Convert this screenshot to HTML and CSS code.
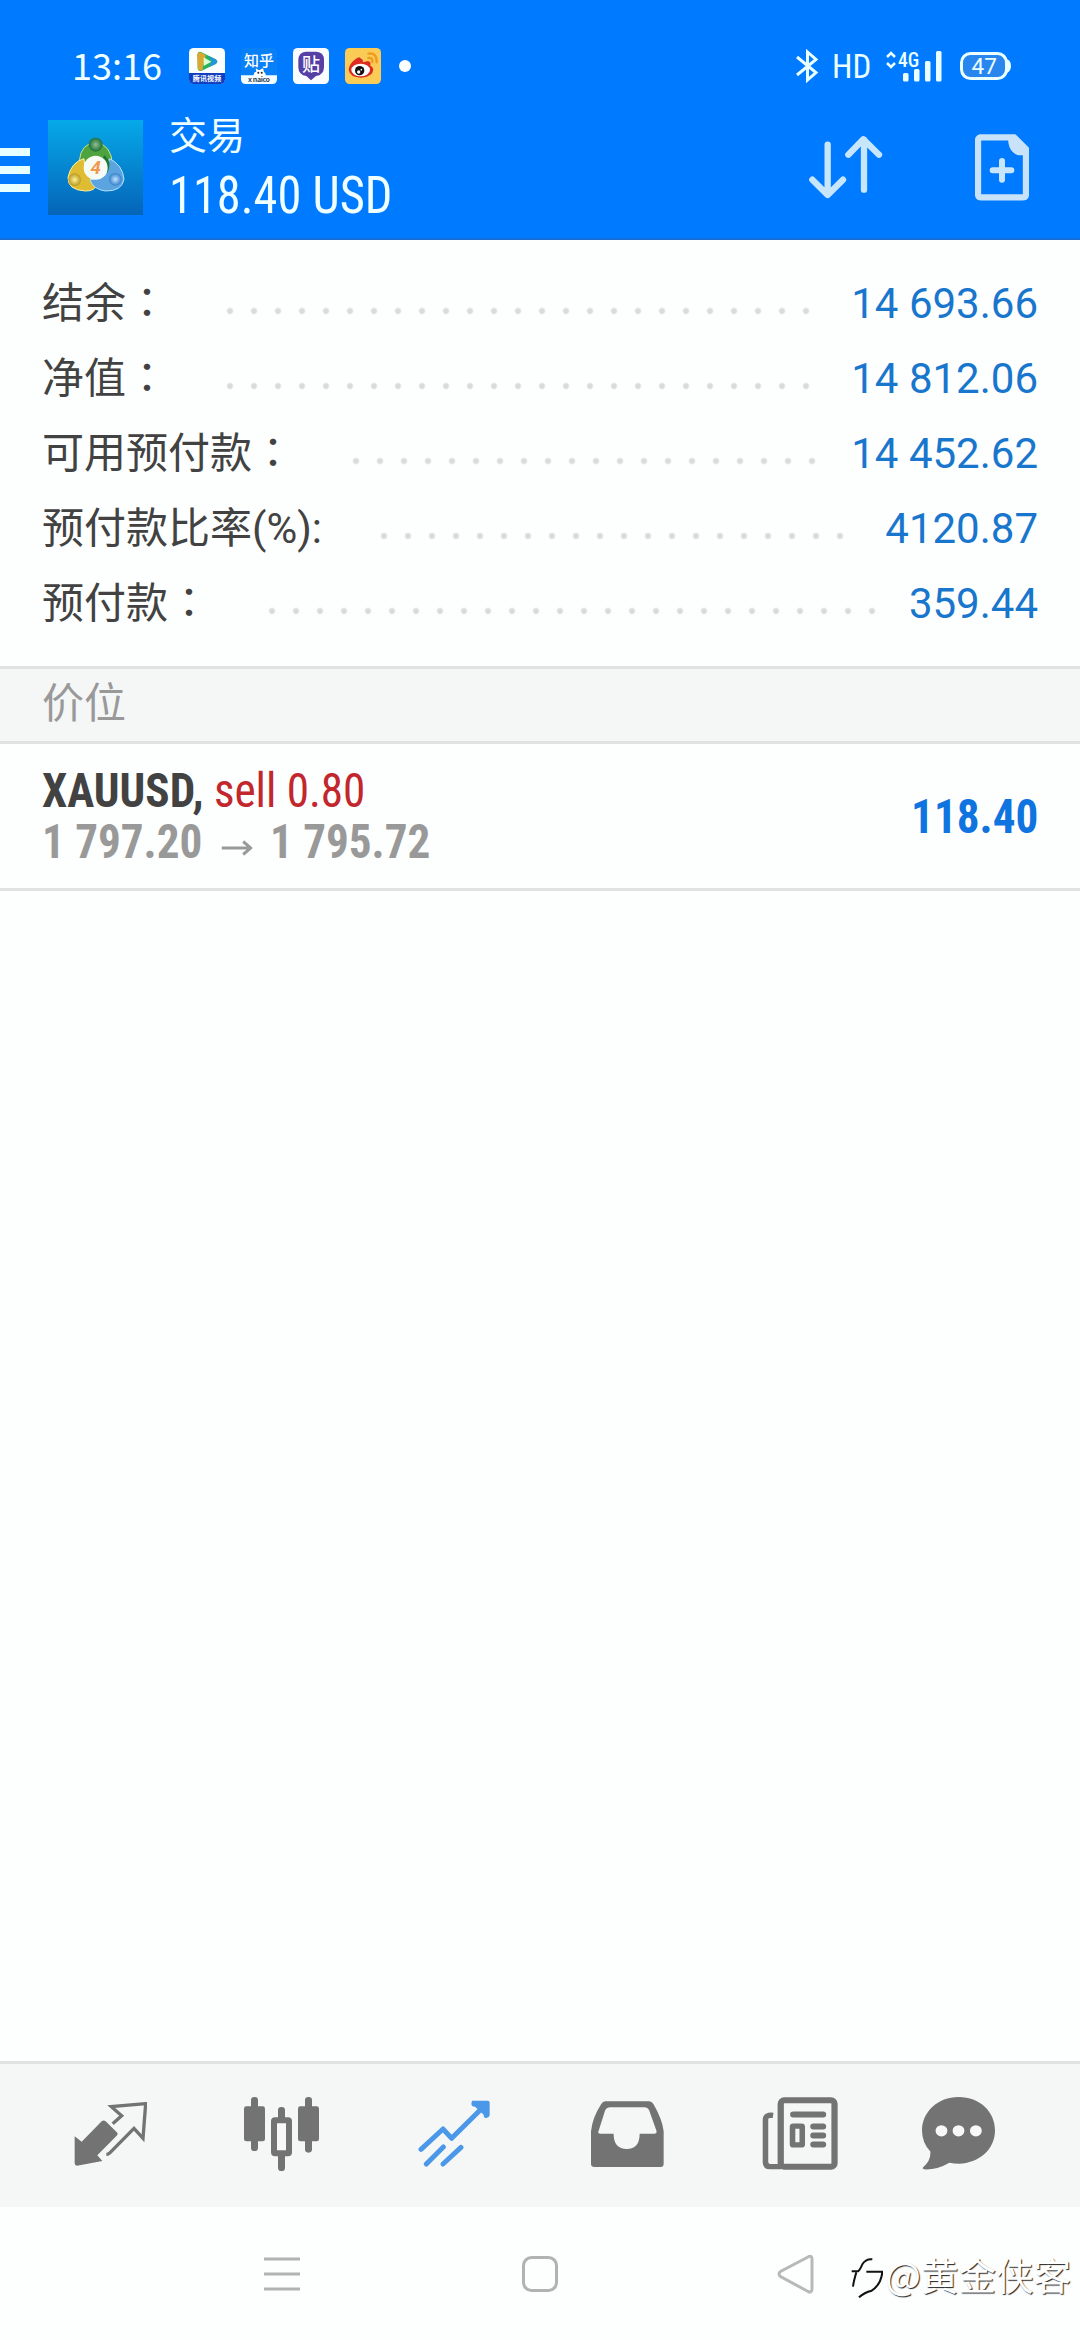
FILE: index.html
```html
<!DOCTYPE html>
<html lang="zh-CN">
<head>
  <meta charset="UTF-8" />
  <meta name="viewport" content="width=device-width, initial-scale=1.0"/>
  <title>交易</title>
  <link rel="stylesheet" href="styles.css">
</head>
<body>
  <header>
    <!-- status bar -->
    <div class="status-bar">
      <span class="time">13:16</span>
      <div class="notif-icons">
        <svg width="36" height="36" viewBox="0 0 108 108">
          <rect width="108" height="108" rx="14" fill="#fbffff"/>
          <path d="M0 75H108V94Q108 108 94 108H14Q0 108 0 94Z" fill="#123fc0"/>
          <path d="M26 17Q27 9 36 12L80 34Q90 41 80 48L38 68Q27 71 26 60Z" fill="#2bb35c"/>
          <path d="M24 20Q26 10 38 14L50 22 40 66Q28 71 26 60Z" fill="#d9a832"/>
          <path d="M58 23L80 34Q90 41 80 48L60 57 68 40Z" fill="#2196d8"/>
          <path d="M44 28L67 41 44 54Z" fill="#d8ffd2"/>
          <text class="tiny" x="54" y="99" textLength="86" fill="#fff">腾讯视频</text>
        </svg>
        <svg width="36" height="36" viewBox="0 0 108 108">
          <rect width="108" height="108" rx="14" fill="#0a80f6"/>
          <path d="M0 82H108V94Q108 108 94 108H14Q0 108 0 94Z" fill="#f4fdff"/>
          <text class="zhihu" x="54" y="55" fill="#fff">知乎</text>
          <path d="M38 84Q38 71 46 71L44 61 54 67 66 61 69 72Q76 76 74 86Z" fill="#fff"/>
          <circle cx="52" cy="74" r="3" fill="#222"/><circle cx="62" cy="74" r="3" fill="#222"/>
          <text class="tiny" x="54" y="103" textLength="66" fill="#345">x naico</text>
        </svg>
        <svg width="36" height="36" viewBox="0 0 108 108">
          <rect width="108" height="108" rx="14" fill="#fafdff"/>
          <path d="M38 11H70Q93 12 93 36V58Q92 82 69 84L54 97 40 84Q17 82 16 58V36Q17 12 38 11Z" fill="#5740a5"/>
          <text class="tie" x="54" y="68" fill="#fff">贴</text>
        </svg>
        <svg width="36" height="36" viewBox="0 0 108 108">
          <rect width="108" height="108" rx="14" fill="#fbcc55"/>
          <path d="M48 32Q44 23 33 32Q12 46 11 66Q15 88 48 89Q83 86 85 65Q84 56 76 53Q79 38 66 40L53 43Q56 34 48 32Z" fill="#dd2b22"/>
          <ellipse cx="47" cy="66" rx="28" ry="19" fill="#fff"/>
          <circle cx="44" cy="68" r="14" fill="#111"/>
          <circle cx="41" cy="72" r="5" fill="#fff"/><circle cx="49" cy="65" r="2.500" fill="#fff"/>
          <path d="M70 17Q96 13 95 43M70 30Q84 28 82 42" fill="none" stroke="#f09a22" stroke-width="7" stroke-linecap="round"/>
        </svg>
      </div>
      <span class="more-dot"></span>
      <svg class="status-right" width="216" height="34" viewBox="0 0 216 34">
        <path d="M2 8L21 23.500 12.500 31V3L21 10.500 2 26" fill="none" stroke="#eaffff" stroke-width="3"/>
        <text class="hd" x="37" y="29">HD</text>
        <path d="M92 8L96 4 100 8M92 14L96 18 100 14" fill="none" stroke="#eaffff" stroke-width="2.500"/>
        <text class="net" x="103" y="17.500">4G</text>
        <g fill="#eaffff">
          <rect x="108" y="24" width="5.500" height="8.500" rx="1.500"/>
          <rect x="119" y="20" width="5.500" height="12.500" rx="1.500"/>
          <rect x="130" y="12" width="5.500" height="20.500" rx="1.500"/>
          <rect x="141" y="2" width="5.500" height="30.500" rx="1.500"/>
          <path d="M212 10Q216 12 216 17Q216 22 212 24Z"/>
        </g>
        <rect x="166.500" y="4.500" width="45" height="25" rx="9" fill="#2a86ef" stroke="#eaffff" stroke-width="3"/>
        <text class="battery" x="176.500" y="25">47</text>
      </svg>
    </div>

    <!-- title bar -->
    <div class="title-bar">
      <div class="drawer"><i></i><i></i><i></i></div>
      <svg class="app-logo" width="95" height="95" viewBox="0 0 285 285">
        <defs>
          <linearGradient id="bg" x1="0" y1="0" x2="0" y2="1"><stop offset="0" stop-color="#06a9e8"/><stop offset="1" stop-color="#0564b8"/></linearGradient>
          <radialGradient id="green"><stop offset="0" stop-color="#8fc08a"/><stop offset="1" stop-color="#1d6d3c"/></radialGradient>
          <radialGradient id="gold"><stop offset="0" stop-color="#fff09a"/><stop offset="1" stop-color="#b99a20"/></radialGradient>
          <radialGradient id="sky"><stop offset="0" stop-color="#bfe4ff"/><stop offset="1" stop-color="#3580cb"/></radialGradient>
        </defs>
        <rect width="285" height="285" fill="url(#bg)"/>
        <path d="M94 122Q99 70 143 68Q190 72 194 136L170 160 118 130Z" fill="#4fa33e" stroke="#c3e58d" stroke-width="3"/>
        <path d="M108 116Q70 126 60 172Q58 210 112 213Q142 214 148 190L112 160Z" fill="#dfbc31" stroke="#fff1a0" stroke-width="3"/>
        <path d="M184 116Q224 134 228 178Q222 214 172 213Q136 208 126 180L172 166Z" fill="#5ba4df" stroke="#b6e1ff" stroke-width="3"/>
        <path d="M168 105Q194 124 178 158L160 132Z" fill="#187832"/>
        <circle cx="143" cy="74" r="21" fill="url(#green)"/>
        <circle cx="80" cy="179" r="19" fill="url(#gold)"/>
        <circle cx="202" cy="178" r="19" fill="url(#sky)"/>
        <circle cx="143" cy="143" r="36" fill="#f6fbf6"/>
        <text class="four" x="143" y="163">4</text>
      </svg>
      <div class="titles">
        <div class="title">交易</div>
        <div class="balance">118.40 USD</div>
      </div>
      <svg class="sort-icon" width="74" height="66" viewBox="148 316 222 198" fill="none" stroke="#c8e6fb" stroke-width="19" stroke-linecap="round" stroke-linejoin="round">
        <path d="M204 345V494M158 450L204 496 250 450M313 480V330M266 375L311 329 358 375"/>
      </svg>
      <svg class="new-order" width="54" height="67" viewBox="645 314 162 201">
        <path d="M658 324H762L798 360V493Q798 504 787 504H665Q654 504 654 493V335Q654 324 665 324Z" fill="none" stroke="#c8e3f9" stroke-width="19"/>
        <path d="M744 324L767 318 806 358V378H776Q744 370 744 324Z" fill="#c8e3f9"/>
        <path d="M698 423H754M726 395V451" stroke="#c8e6fb" stroke-width="18" stroke-linecap="round"/>
      </svg>
    </div>
  </header>

  <main>
    <!-- account summary -->
    <ul class="account">
      <li><span class="label">结余<b lang="zh-TW">：</b></span><span class="dots"></span><span class="value">14 693.66</span></li>
      <li><span class="label">净值<b lang="zh-TW">：</b></span><span class="dots"></span><span class="value">14 812.06</span></li>
      <li><span class="label">可用预付款<b lang="zh-TW">：</b></span><span class="dots"></span><span class="value">14 452.62</span></li>
      <li><span class="label">预付款比率(%):</span><span class="dots"></span><span class="value">4120.87</span></li>
      <li><span class="label">预付款<b lang="zh-TW">：</b></span><span class="dots"></span><span class="value">359.44</span></li>
    </ul>

    <div class="section-title">价位</div>

    <!-- open position -->
    <div class="position">
      <div class="position-info">
        <div class="symbol"><strong>XAUUSD,</strong> <span class="sell">sell 0.80</span></div>
        <div class="prices">
          <span>1 797.20</span>
          <svg width="33" height="16" viewBox="0 0 33 16" fill="none" stroke="#999" stroke-width="3"><path d="M0 8H31M23 1.500L31 8 23 14.500"/></svg>
          <span>1 795.72</span>
        </div>
      </div>
      <div class="profit">118.40</div>
    </div>
  </main>

  <nav class="tabs">
    <a><svg width="73" height="64" viewBox="101 157 219 192">
      <path d="M103 260L124 276 184 215Q190 210 196 215L231 249Q234 253 229 258L171 317 186 334 110 348Q103 348 103 341Z" fill="#727372"/>
      <path d="M217 222L244 198 213 171 316 162 308 266 281 236 210 308Q204 314 198 314" fill="none" stroke="#727372" stroke-width="10"/>
    </svg></a>
    <a><svg width="75" height="74" viewBox="612 140 225 222" fill="#727372">
      <rect x="612" y="168" width="63" height="105" rx="7"/><rect x="633" y="140" width="21" height="162" rx="10"/>
      <rect x="774" y="168" width="63" height="105" rx="7"/><rect x="795" y="140" width="21" height="167" rx="10"/>
      <rect x="714" y="170" width="21" height="50" rx="10"/><rect x="714" y="300" width="21" height="62" rx="10"/>
      <rect x="702" y="210" width="45" height="99" rx="3" fill="#f8f8f8" stroke="#727372" stroke-width="18"/>
    </svg></a>
    <a class="active"><svg width="72" height="67" viewBox="1133 148 216 201" fill="none" stroke="#4c98e8" stroke-width="15" stroke-linecap="round" stroke-linejoin="round">
      <path d="M1142 296L1208 235 1234 263 1328 170M1158 340L1209 289M1208 340L1262 290"/>
      <path d="M1295 150H1342Q1348 150 1348 156V194Q1346 202 1338 202Q1330 202 1330 192L1304 168Q1293 168 1293 159Z" fill="#4c98e8" stroke="none"/>
    </svg></a>
    <a><svg width="73" height="66" viewBox="147 149 210 199" preserveAspectRatio="none" fill="#727372" fill-rule="evenodd">
      <path d="M188 150H314Q322 150 327 159Q352 205 356 240V338Q356 348 347 348H157Q147 348 147 338V240Q151 200 176 159Q181 150 188 150ZM201 168Q192 168 188 176L169 239Q165 248 175 248H212Q212 294 250 294Q287 294 287 248H328Q338 248 335 238L314 176Q310 168 302 168Z"/>
    </svg></a>
    <a><svg width="76" height="73" viewBox="645 140 219 218" preserveAspectRatio="none" fill="none" stroke="#727372">
      <rect x="699" y="150" width="155" height="198" rx="10" stroke-width="18"/>
      <path d="M677 195Q655 192 655 208V334Q655 348 669 348H700" stroke-width="16"/>
      <path d="M735 192H821M793 228H821M793 255H821M793 282H821" stroke-width="18" stroke-linecap="round"/>
      <rect x="733" y="227" width="28" height="56" rx="2" stroke-width="16"/>
    </svg></a>
    <a><svg width="73" height="73" viewBox="1108 140 210 218" preserveAspectRatio="none" fill="#727372">
      <path d="M1213 140C1275 140 1318 184 1318 240C1318 298 1270 338 1215 339Q1200 339 1187 336Q1150 358 1114 356Q1107 355 1112 349Q1134 330 1132 303Q1108 276 1108 240C1108 184 1154 140 1213 140Z"/>
      <g fill="#f8f8f8"><circle cx="1164" cy="241" r="17"/><circle cx="1213" cy="241" r="17"/><circle cx="1263" cy="241" r="17"/></g>
    </svg></a>
  </nav>

  <!-- system navigation -->
  <footer>
    <svg class="nav-menu" width="36" height="40" viewBox="0 0 36 40" stroke="#b2b2b2" stroke-width="3"><path d="M0 5H36M0 20H36M0 35H36"/></svg>
    <svg class="nav-home" width="36" height="36" viewBox="0 0 36 36"><rect x="1.500" y="1.500" width="33" height="33" rx="8" fill="none" stroke="#b2b2b2" stroke-width="3"/></svg>
    <svg class="nav-back" width="38" height="40" viewBox="0 0 38 40"><path d="M32 2.500L3.500 17.500Q0.500 20 3.500 22.500L31 37.500Q35 39 35 35V5Q35 1.500 32 2.500Z" fill="none" stroke="#b8b8b8" stroke-width="3"/></svg>
    <div class="watermark">
      <svg width="32" height="42" viewBox="0 0 96 126" fill="none" stroke="#111" stroke-width="6">
        <path d="M64 10Q44 8 34 25Q26 43 21 46H2M16 49Q8 75 6 92M46 47H94Q91 85 62 104Q40 109 24 124"/>
      </svg>
      <span>@黄金侠客</span>
    </div>
  </footer>
</body>
</html>
```

FILE: styles.css
```css
* {
  margin: 0;
  padding: 0;
  box-sizing: border-box;
}

body {
  width: 1080px;
  height: 2340px;
  display: flex;
  flex-direction: column;
  background: #fdfefe;
  color: #424242;
  font-family: Roboto, "Noto Sans CJK SC", sans-serif;
  overflow: hidden;
}

svg {
  display: block;
  flex: none;
}

header {
  height: 240px;
  background: #007aff;
  color: #f0ffff;
  border-bottom: 2px solid #1470d8;
}

/* status bar */
.status-bar {
  display: flex;
  align-items: center;
  height: 96px;
  padding: 36px 69px 0 72px;
}

.time {
  width: 117px;
  margin-top: -4px;
  font-family: "Noto Sans CJK SC", sans-serif;
  font-size: 36px;
  line-height: 36px;
}

.notif-icons {
  display: flex;
  gap: 16px;
}

.more-dot {
  width: 12px;
  height: 12px;
  margin-left: 18px;
  border-radius: 50%;
  background: #fff;
}

.status-right {
  margin-left: auto;
  overflow: visible;
}

.status-right text {
  fill: #eaffff;
  font-family: Roboto, sans-serif;
}

.hd { font-size: 33px; font-stretch: 82%; }
.net { font-size: 19.5px; font-stretch: 80%; font-weight: 500; }
.battery { font-size: 22.5px; }

.tiny,
.zhihu,
.tie {
  font-family: "Noto Sans CJK SC", sans-serif;
  text-anchor: middle;
}

.tiny { font-size: 21px; font-weight: bold; }
.zhihu { font-size: 45px; font-weight: 500; }
.tie { font-size: 54px; font-weight: 500; }

/* title bar */
.title-bar {
  display: flex;
  align-items: flex-start;
  height: 142px;
  padding: 14px 51px 0 0;
}

.drawer {
  display: flex;
  flex-direction: column;
  gap: 10px;
  width: 30px;
  margin: 38px 18px 0 0;
}

.drawer i {
  height: 8px;
  background: #e8ffff;
}

.app-logo {
  margin-top: 10px;
}

.four {
  font-size: 56px;
  font-style: italic;
  font-weight: bold;
  text-anchor: middle;
  fill: #ef9a4e;
}

.titles {
  margin-left: 26px;
  flex: 1;
}

.title {
  font-size: 38px;
  line-height: 52px;
}

.balance {
  font-size: 51px;
  line-height: 68px;
  font-stretch: 75%;
  transform: scaleX(0.95);
  transform-origin: left;
}

.sort-icon {
  margin: 25px 92px 0 0;
}

.new-order {
  margin-top: 24px;
}

/* account summary */
main {
  flex: 1;
}

.account {
  height: 426px;
  padding: 26px 42px 0;
  list-style: none;
}

.account li {
  display: flex;
  height: 75px;
  font-size: 42px;
  line-height: 75px;
}

.label b {
  font-family: "Noto Sans CJK TC", sans-serif;
  font-weight: normal;
  line-height: 0;
}

.dots {
  flex: 1;
  height: 24px;
  margin: 33px 25px 0 50px;
  background: radial-gradient(circle, #dadada 2px, transparent 4px) 0 0 / 24px 24px repeat-x;
}

.value {
  color: #1976cd;
}

.section-title {
  height: 78px;
  padding-left: 42px;
  background: #f5f6f6;
  border-top: 3px solid #e1e1e1;
  border-bottom: 3px solid #e1e1e1;
  color: #999;
  font-size: 42px;
  line-height: 70px;
}

/* open position */
.position {
  display: flex;
  align-items: center;
  justify-content: space-between;
  height: 147px;
  padding: 0 42px;
  border-bottom: 3px solid #e1e1e1;
  font-size: 48px;
  font-stretch: 75%;
}

.position-info {
  transform: scaleX(0.94);
  transform-origin: left;
}

.symbol,
.prices {
  line-height: 51px;
}

.sell {
  color: #c1272d;
}

.prices {
  display: flex;
  align-items: center;
  color: #999;
  font-weight: bold;
}

.prices svg {
  margin: 12px 19px 0 20px;
}

.profit {
  color: #0f74df;
  font-weight: bold;
  transform: scaleX(0.94);
  transform-origin: right;
}

/* bottom tabs */
.tabs {
  display: grid;
  grid-template-columns: 173px 169px 175px 172px 174px 142px;
  height: 146px;
  padding: 0 0 4px 24px;
  background: #f5f6f6;
  border-top: 3px solid #e1e1e1;
}

.tabs a {
  display: flex;
  align-items: center;
  justify-content: center;
}

/* system navigation */
footer {
  position: relative;
  display: flex;
  align-items: center;
  height: 133px;
  padding-left: 264px;
}

.nav-home { margin-left: 222px; }
.nav-back { margin-left: 219px; }

.watermark {
  position: absolute;
  right: 9px;
  top: 39px;
  display: flex;
  align-items: center;
  gap: 3px;
  color: #fff;
  font-family: "Noto Sans CJK SC", sans-serif;
  font-size: 37.5px;
  text-shadow: 1px 1px 1px #222;
}

.watermark svg {
  margin-top: 6px;
}
```
